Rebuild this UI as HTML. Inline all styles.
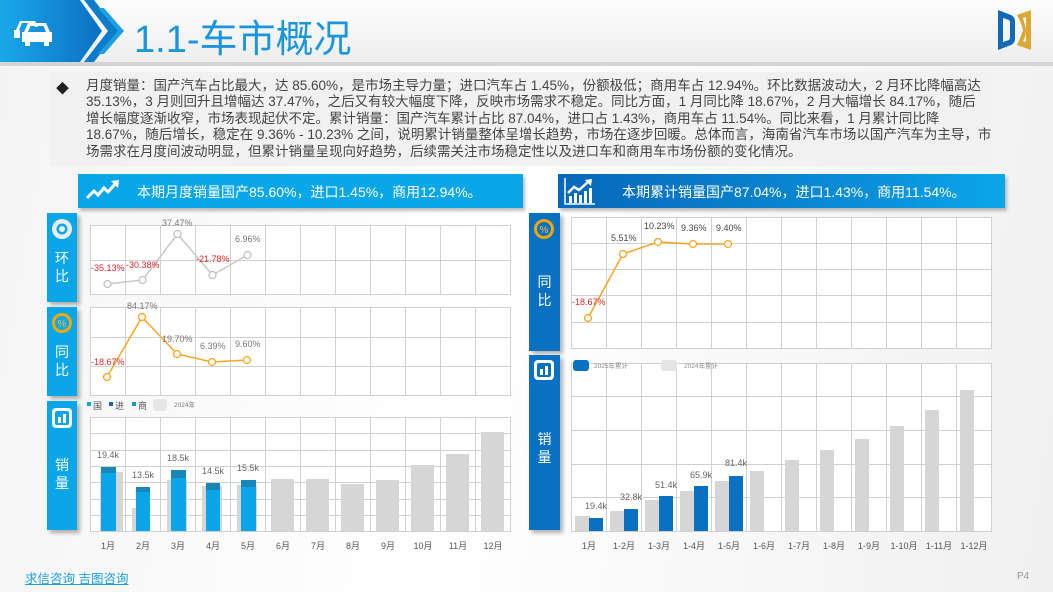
<!DOCTYPE html>
<html><head><meta charset="utf-8"><style>
*{margin:0;padding:0;box-sizing:border-box}
body{width:1053px;height:592px;overflow:hidden;position:relative;background:linear-gradient(100deg,#f4f4f4 0%,#ffffff 45%,#f0f0f0 100%);font-family:"Liberation Sans","Noto Sans CJK SC",sans-serif}
.abs{position:absolute}
.txt{left:86px;top:78px;width:910px;font-size:13.5px;line-height:16.4px;color:#444;white-space:nowrap}
.tab{position:absolute;color:#fff;font-size:14px;line-height:18px;text-align:center;box-shadow:3px 3px 4px rgba(0,0,0,.3)}
</style></head><body>
<div class="abs" style="left:0;top:0;width:1053px;height:62px;background:linear-gradient(180deg,#fdfdfd,#eeeeee)"></div>
<div class="abs" style="left:0;top:62px;width:1053px;height:4px;background:#d4d4d4"></div>
<svg class="abs" style="left:0;top:0" width="140" height="66">
<defs><linearGradient id="hg" x1="0" x2="1"><stop offset="0" stop-color="#1aa9ea"/><stop offset="1" stop-color="#0a6fc2"/></linearGradient></defs>
<polygon points="0,0 80,0 102,31 80,62 0,62" fill="url(#hg)"/>
<polygon points="84,0 94,0 118,31 94,62 84,62 108,31" fill="#0c7ccc"/>
<polygon points="98,8 104,8 124,31 104,54 98,54 118,31" fill="#1fa0e0"/>
<g fill="#fff"><path d="M16,30 l4,-9 h15 l3,6 h-3 l-2,-4 h-11 l-3,7z M14,30 h6 v8 h-6z"/>
<path d="M24,32 l4,-9 h18 l4,9 h2 v10 h-3 v4 h-5 v-4 h-14 v4 h-5 v-4 h-3 v-10z M28,32 h18 l-2.5,-6 h-13z" fill-rule="evenodd"/></g>
</svg>
<div class="abs" style="left:134px;top:8px;font-size:38px;color:#1a96dc">1.1-车市概况</div>
<svg class="abs" style="left:995px;top:6px" width="40" height="46">
<path d="M3,4 L16,9 Q20,11 20,15 L20,33 Q20,37 16,39 L3,44 Z M8,12 L8,36 L14,34 Q15,33 15,31 L15,17 Q15,15 14,14Z" fill="#1369b5" fill-rule="evenodd"/>
<path d="M22,9 L36,4 L36,44 L22,39 Q26,31 28,24 Q26,16 22,9Z M28,12 L31,11 L31,36 L28,35 Q31,30 31,24 Q30,18 28,12Z" fill="#d9a933" fill-rule="evenodd"/>
</svg>
<div class="abs" style="left:50px;top:72px;width:942px;height:94px;background:#f1f1f1"></div>
<div class="abs" style="left:56px;top:78px;font-size:13px;color:#222">◆</div>
<div class="abs txt">月度销量：国产汽车占比最大，达 85.60%，是市场主导力量；进口汽车占 1.45%，份额极低；商用车占 12.94%。环比数据波动大，2 月环比降幅高达<br>35.13%，3 月则回升且增幅达 37.47%，之后又有较大幅度下降，反映市场需求不稳定。同比方面，1 月同比降 18.67%，2 月大幅增长 84.17%，随后<br>增长幅度逐渐收窄，市场表现起伏不定。累计销量：国产汽车累计占比 87.04%，进口占 1.43%，商用车占 11.54%。同比来看，1 月累计同比降<br>18.67%，随后增长，稳定在 9.36% - 10.23% 之间，说明累计销量整体呈增长趋势，市场在逐步回暖。总体而言，海南省汽车市场以国产汽车为主导，市<br>场需求在月度间波动明显，但累计销量呈现向好趋势，后续需关注市场稳定性以及进口车和商用车市场份额的变化情况。</div>
<div class="abs" style="left:78px;top:174px;width:445px;height:34px;background:#09a6e8;box-shadow:2px 3px 3px rgba(0,0,0,.25)"></div>
<svg class="abs" style="left:84px;top:178px" width="40" height="28"><path d="M3,20 L10,13 L14,17 L20,10 L24,14 L32,5" stroke="#fff" stroke-width="3" fill="none"/><polygon points="27,3 35,2 34,10" fill="#fff"/></svg>
<div class="abs" style="left:137px;top:182px;font-size:14px;color:#fff">本期月度销量国产85.60%，进口1.45%，商用12.94%。</div>
<div class="abs" style="left:558px;top:174px;width:447px;height:34px;background:linear-gradient(90deg,#0768bb,#0a8fd8 70%,#0aa7ea);box-shadow:2px 3px 3px rgba(0,0,0,.25)"></div>
<svg class="abs" style="left:563px;top:176px" width="34" height="30"><path d="M2,2 V28 H32" stroke="#fff" stroke-width="1.5" fill="none"/><g fill="#fff"><rect x="6" y="20" width="3" height="7"/><rect x="11" y="17" width="3" height="10"/><rect x="16" y="19" width="3" height="8"/><rect x="21" y="15" width="3" height="12"/><rect x="26" y="12" width="3" height="15"/></g><path d="M5,17 L11,11 L16,14 L25,6" stroke="#fff" stroke-width="2.5" fill="none"/><polygon points="22,4 29,3 28,10" fill="#fff"/></svg>
<div class="abs" style="left:622px;top:182px;font-size:14px;color:#fff">本期累计销量国产87.04%，进口1.43%，商用11.54%。</div>
<div class="tab" style="left:47px;top:213px;width:30px;height:89px;background:#0aa6e8;padding-top:36px">环<br>比</div>
<div class="tab" style="left:47px;top:307px;width:30px;height:89px;background:#0aa6e8;padding-top:36px">同<br>比</div>
<div class="tab" style="left:47px;top:401px;width:30px;height:129px;background:#0aa6e8;padding-top:55px">销<br>量</div>
<div class="tab" style="left:529px;top:213px;width:31px;height:138px;background:#0a70c2;padding-top:60px">同<br>比</div>
<div class="tab" style="left:529px;top:355px;width:31px;height:175px;background:#0a70c2;padding-top:75px">销<br>量</div>
<svg class="abs" style="left:0;top:0" width="1053" height="592" font-family="Liberation Sans,Noto Sans CJK SC,sans-serif">
<circle cx="62" cy="229" r="10" fill="#e8eef2"/><circle cx="62" cy="229" r="5.5" fill="#0aa6e8"/><circle cx="62" cy="229" r="3" fill="#e8eef2"/>
<circle cx="62" cy="323" r="10" fill="#f5a800"/><circle cx="62" cy="323" r="7" fill="#0aa6e8"/><text x="62" y="327" font-size="10" fill="#f5c24a" text-anchor="middle">%</text>
<rect x="52" y="408" width="20" height="20" rx="4" fill="#fff"/><rect x="55" y="411" width="14" height="14" rx="2" fill="#0aa6e8"/><rect x="58" y="417" width="3" height="6" fill="#fff"/><rect x="63" y="414" width="3" height="9" fill="#fff"/>
<circle cx="544" cy="229" r="10" fill="#f5a800"/><circle cx="544" cy="229" r="7" fill="#0a70c2"/><text x="544" y="233" font-size="10" fill="#f5c24a" text-anchor="middle">%</text>
<rect x="534" y="360" width="20" height="20" rx="4" fill="#fff"/><rect x="537" y="363" width="14" height="14" rx="2" fill="#0a70c2"/><rect x="540" y="369" width="3" height="6" fill="#fff"/><rect x="545" y="366" width="3" height="9" fill="#fff"/>
<g stroke="#d0d0d0" stroke-width="1" fill="none">
<rect x="90.5" y="225.5" width="420" height="69" fill="#fff"/>
<path d="M90,260.5H510 M125.5,225V295 M160.5,225V295 M195.5,225V295 M230.5,225V295 M265.5,225V295 M300.5,225V295 M335.5,225V295 M370.5,225V295 M405.5,225V295 M440.5,225V295 M475.5,225V295"/>
<rect x="90.5" y="307.5" width="420" height="88" fill="#fff"/>
<path d="M90,337.5H510 M90,366.5H510 M125.5,307V396 M160.5,307V396 M195.5,307V396 M230.5,307V396 M265.5,307V396 M300.5,307V396 M335.5,307V396 M370.5,307V396 M405.5,307V396 M440.5,307V396 M475.5,307V396"/>
<rect x="90.5" y="417.5" width="420" height="114" fill="#fff"/>
<path d="M90,433.5H510 M90,450.5H510 M90,466.5H510 M90,482.5H510 M90,499.5H510 M90,515.5H510 M125.5,417V531 M160.5,417V531 M195.5,417V531 M230.5,417V531 M265.5,417V531 M300.5,417V531 M335.5,417V531 M370.5,417V531 M405.5,417V531 M440.5,417V531 M475.5,417V531"/>
<rect x="571.5" y="217.5" width="420" height="131" fill="#fff"/>
<path d="M571,243.5H991 M571,269.5H991 M571,295.5H991 M571,322.5H991 M606.5,217V348 M641.5,217V348 M676.5,217V348 M711.5,217V348 M746.5,217V348 M781.5,217V348 M816.5,217V348 M851.5,217V348 M886.5,217V348 M921.5,217V348 M956.5,217V348"/>
<rect x="571.5" y="363.5" width="420" height="168" fill="#fff"/>
<path d="M571,396.5H991 M571,430.5H991 M571,464.5H991 M571,497.5H991 M606.5,363V531 M641.5,363V531 M676.5,363V531 M711.5,363V531 M746.5,363V531 M781.5,363V531 M816.5,363V531 M851.5,363V531 M886.5,363V531 M921.5,363V531 M956.5,363V531"/>
</g>
<polyline points="107.5,284 142.5,280 177.5,234 212.5,275 247.5,255" stroke="#c8c8c8" stroke-width="1.5" fill="none"/>
<g fill="#fff" stroke="#c0c0c0" stroke-width="1.3"><circle cx="107.5" cy="284" r="3.5"/><circle cx="142.5" cy="280" r="3.5"/><circle cx="177.5" cy="234" r="3.5"/><circle cx="212.5" cy="275" r="3.5"/><circle cx="247.5" cy="255" r="3.5"/></g>
<g font-size="9"><text x="91" y="271" fill="#e0242b">-35.13%</text><text x="126" y="268" fill="#e0242b">-30.38%</text><text x="162" y="226" fill="#777">37.47%</text><text x="196" y="262" fill="#e0242b">-21.78%</text><text x="235" y="242" fill="#777">6.96%</text></g>
<polyline points="107,377 142,317 177,354 212,362 247,360" stroke="#f5a623" stroke-width="1.5" fill="none"/>
<g fill="#fff" stroke="#f5a623" stroke-width="1.3"><circle cx="107" cy="377" r="3.5"/><circle cx="142" cy="317" r="3.5"/><circle cx="177" cy="354" r="3.5"/><circle cx="212" cy="362" r="3.5"/><circle cx="247" cy="360" r="3.5"/></g>
<g font-size="9"><text x="91" y="365" fill="#e0242b">-18.67%</text><text x="127" y="309" fill="#777">84.17%</text><text x="162" y="342" fill="#777">19.70%</text><text x="200" y="349" fill="#777">6.39%</text><text x="235" y="347" fill="#777">9.60%</text></g>
<g font-size="9" fill="#555"><rect x="87" y="402" width="4" height="4" fill="#0aa6e8"/><text x="93" y="409">国</text><rect x="109" y="402" width="4" height="4" fill="#1a64b0"/><text x="115" y="409">进</text><rect x="132" y="402" width="4" height="4" fill="#119bb8"/><text x="138" y="409">商</text><rect x="153" y="399" width="14" height="12" rx="3" fill="#e6e6e6"/><text x="174" y="407" font-size="6.5" fill="#777">2024年</text></g>
<g fill="#d6d6d6"><rect x="100" y="472" width="23" height="59"/><rect x="132" y="508" width="14" height="23"/><rect x="167" y="480" width="20" height="51"/><rect x="202" y="486" width="20" height="45"/><rect x="237" y="485" width="20" height="46"/>
<rect x="271" y="479" width="23" height="52"/><rect x="306" y="479" width="23" height="52"/><rect x="341" y="484" width="23" height="47"/><rect x="376" y="480" width="23" height="51"/><rect x="411" y="465" width="23" height="66"/><rect x="446" y="454" width="23" height="77"/><rect x="481" y="432" width="23" height="99"/></g>
<g fill="#0aa6e8"><rect x="101" y="467" width="15" height="64"/><rect x="136" y="487" width="14" height="44"/><rect x="171" y="470" width="15" height="61"/><rect x="206" y="483" width="14" height="48"/><rect x="241" y="480" width="15" height="51"/></g>
<g fill="#1887b8"><rect x="101" y="467" width="15" height="6"/><rect x="136" y="487" width="14" height="5"/><rect x="171" y="470" width="15" height="8"/><rect x="206" y="483" width="14" height="7"/><rect x="241" y="480" width="15" height="7"/></g>
<g font-size="9" fill="#666" text-anchor="middle"><text x="108" y="458">19.4k</text><text x="143" y="478">13.5k</text><text x="178" y="461">18.5k</text><text x="213" y="474">14.5k</text><text x="248" y="471">15.5k</text></g>
<g font-size="9" fill="#555" text-anchor="middle"><text x="108" y="549">1月</text><text x="143" y="549">2月</text><text x="178" y="549">3月</text><text x="213" y="549">4月</text><text x="248" y="549">5月</text><text x="283" y="549">6月</text><text x="318" y="549">7月</text><text x="353" y="549">8月</text><text x="388" y="549">9月</text><text x="423" y="549">10月</text><text x="458" y="549">11月</text><text x="493" y="549">12月</text></g>
<polyline points="588,318 623,254 658,242 693,244 728,244" stroke="#f5a623" stroke-width="1.5" fill="none"/>
<g fill="#fff" stroke="#f5a623" stroke-width="1.3"><circle cx="588" cy="318" r="3.5"/><circle cx="623" cy="254" r="3.5"/><circle cx="658" cy="242" r="3.5"/><circle cx="693" cy="244" r="3.5"/><circle cx="728" cy="244" r="3.5"/></g>
<g font-size="9"><text x="572" y="305" fill="#e0242b">-18.67%</text><text x="611" y="241" fill="#444">5.51%</text><text x="644" y="229" fill="#444">10.23%</text><text x="681" y="231" fill="#444">9.36%</text><text x="716" y="231" fill="#444">9.40%</text></g>
<rect x="573" y="360" width="16" height="11" rx="3" fill="#0a70c2"/><text x="594" y="368" font-size="6.5" fill="#888">2025年累计</text>
<rect x="661" y="360" width="16" height="11" rx="3" fill="#e4e4e4"/><text x="684" y="368" font-size="6.5" fill="#888">2024年累计</text>
<g fill="#d6d6d6"><rect x="575" y="516" width="15" height="15"/><rect x="610" y="511" width="15" height="20"/><rect x="645" y="500" width="15" height="31"/><rect x="680" y="491" width="15" height="40"/><rect x="715" y="481" width="15" height="50"/><rect x="750" y="471" width="14" height="60"/><rect x="785" y="460" width="14" height="71"/><rect x="820" y="450" width="14" height="81"/><rect x="855" y="439" width="14" height="92"/><rect x="890" y="426" width="14" height="105"/><rect x="925" y="410" width="14" height="121"/><rect x="960" y="390" width="14" height="141"/></g>
<g fill="#0a70c2"><rect x="589" y="518" width="14" height="13"/><rect x="624" y="509" width="14" height="22"/><rect x="659" y="496" width="14" height="35"/><rect x="694" y="486" width="14" height="45"/><rect x="729" y="476" width="14" height="55"/></g>
<g font-size="9" fill="#666" text-anchor="middle"><text x="596" y="509">19.4k</text><text x="631" y="500">32.8k</text><text x="666" y="488">51.4k</text><text x="701" y="478">65.9k</text><text x="736" y="466">81.4k</text></g>
<g font-size="9" fill="#555" text-anchor="middle"><text x="589" y="549">1月</text><text x="624" y="549">1-2月</text><text x="659" y="549">1-3月</text><text x="694" y="549">1-4月</text><text x="729" y="549">1-5月</text><text x="764" y="549">1-6月</text><text x="799" y="549">1-7月</text><text x="834" y="549">1-8月</text><text x="869" y="549">1-9月</text><text x="904" y="549">1-10月</text><text x="939" y="549">1-11月</text><text x="974" y="549">1-12月</text></g>
</svg>
<div class="abs" style="left:25px;top:568px;font-size:12.5px;color:#1a9ee0;text-decoration:underline">求信咨询 吉图咨询</div>
<div class="abs" style="left:1017px;top:571px;font-size:10px;color:#999">P4</div>
</body></html>
